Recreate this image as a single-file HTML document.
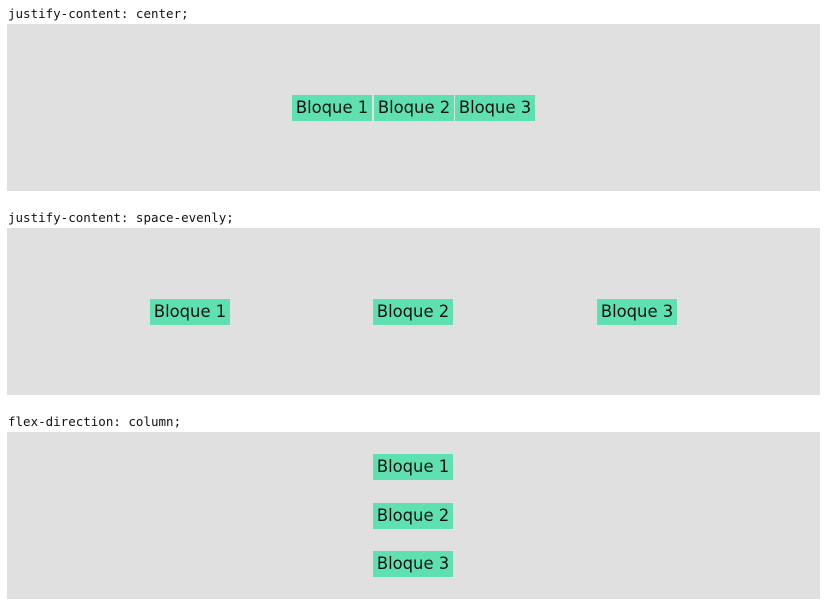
<!DOCTYPE html>
<html><head><style>
body{margin:0;width:825px;height:610px;background:#fff;position:relative;overflow:hidden}
.l{position:absolute;left:8px;font:12.5px "DejaVu Sans Mono","Liberation Mono",monospace;color:#111;line-height:14px}
.g{position:absolute;left:7px;width:813px;height:167px;background:#e0e0e0}
.b{position:absolute;width:80px;height:26px;background:#5fe0b0;font:16.4px "DejaVu Sans","Liberation Sans",sans-serif;color:#111;line-height:26px;text-align:center}
</style></head><body>
<div class="l" style="top:7px">justify-content: center;</div>
<div class="g" style="top:24px"></div>
<div class="b" style="left:292px;top:95px">Bloque 1</div>
<div class="b" style="left:374px;top:95px">Bloque 2</div>
<div class="b" style="left:455px;top:95px">Bloque 3</div>
<div class="l" style="top:211px">justify-content: space-evenly;</div>
<div class="g" style="top:228px"></div>
<div class="b" style="left:150px;top:299px">Bloque 1</div>
<div class="b" style="left:373px;top:299px">Bloque 2</div>
<div class="b" style="left:597px;top:299px">Bloque 3</div>
<div class="l" style="top:415px">flex-direction: column;</div>
<div class="g" style="top:432px"></div>
<div class="b" style="left:373px;top:454px">Bloque 1</div>
<div class="b" style="left:373px;top:503px">Bloque 2</div>
<div class="b" style="left:373px;top:551px">Bloque 3</div>
</body></html>
